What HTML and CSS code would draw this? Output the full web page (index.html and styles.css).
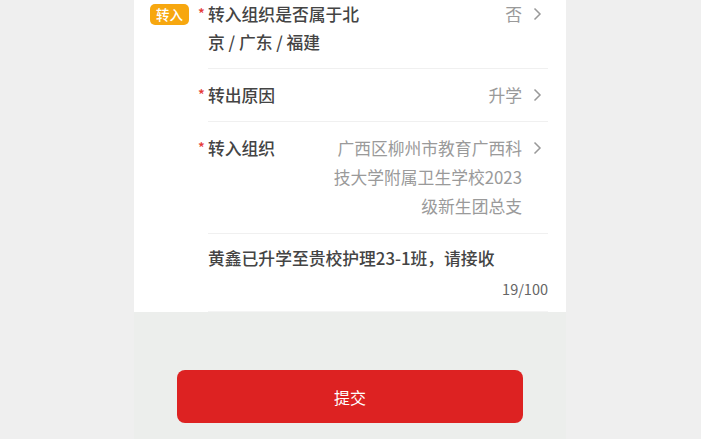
FILE: index.html
```html
<!DOCTYPE html>
<html lang="zh-CN">
<head>
  <meta charset="UTF-8" />
  <title>转接申请</title>
  <meta name="viewport" content="width=device-width, initial-scale=1.0" />
  <link rel="stylesheet" href="styles.css">
</head>
<body>

  <div class="page">

    <!-- 表单 -->
    <div class="card">
      <div class="tag-col">
        <span class="tag">转入</span>
      </div>

      <div class="fields">
        <div class="field">
          <div class="label required">转入组织是否属于北京 / 广东 / 福建</div>
          <div class="value">否</div>
          <svg class="arrow" width="9" height="14" viewBox="0 0 9 14"><path d="M1.5 1.5 L7 7 L1.5 12.5" /></svg>
        </div>

        <div class="field">
          <div class="label required">转出原因</div>
          <div class="value">升学</div>
          <svg class="arrow" width="9" height="14" viewBox="0 0 9 14"><path d="M1.5 1.5 L7 7 L1.5 12.5" /></svg>
        </div>

        <div class="field">
          <div class="label required">转入组织</div>
          <div class="value multi">广西区柳州市教育广西科技大学附属卫生学校2023级新生团总支</div>
          <svg class="arrow" width="9" height="14" viewBox="0 0 9 14"><path d="M1.5 1.5 L7 7 L1.5 12.5" /></svg>
        </div>

        <div class="remark">
          <p class="remark-text">黄鑫已升学至贵校护理23-1班，请接收</p>
          <div class="counter">19/100</div>
        </div>
      </div>
    </div>

    <!-- 底部按钮 -->
    <div class="footer">
      <button class="submit-btn">提交</button>
    </div>

  </div>

</body>
</html>
```

FILE: styles.css
```css
* { box-sizing: border-box; }

body {
  margin: 0;
  padding: 0;
  background-color: #efefef;
  font-family: "Noto Sans CJK SC", "Noto Sans", sans-serif;
  color: #444;
}

.page {
  width: 432px;
  height: 439px;
  margin: 0 0 0 134px;
  background-color: #eceeec;
  display: flex;
  flex-direction: column;
}

.card {
  background-color: #fff;
  display: flex;
  padding: 0 18px 0 16px;
}

.tag-col {
  width: 58px;
  flex-shrink: 0;
  padding-top: 4px;
}

.tag {
  display: block;
  width: 39px;
  height: 21px;
  line-height: 21px;
  text-align: center;
  font-size: 13.5px;
  font-weight: 500;
  color: #fff;
  background-color: #f7a70f;
  border-radius: 5px;
}

.fields {
  flex: 1;
}

.field {
  display: flex;
  align-items: flex-start;
  padding: 12px 0;
  border-bottom: 1px solid #f0f0f0;
  font-size: 16.8px;
  line-height: 28px;
}

.field:first-child {
  padding-top: 0;
}

.label {
  max-width: 9.4em;
  flex-shrink: 0;
  position: relative;
  font-weight: 500;
}

.required::before {
  content: "*";
  position: absolute;
  left: -10px;
  top: -1px;
  font-size: 14px;
  color: #e53935;
}

.value {
  flex: 1;
  text-align: right;
  color: #9a9a9a;
  margin-right: 11px;
}

.value.multi {
  flex: 0 1 auto;
  margin-left: auto;
  max-width: 196px;
  line-height: 29px;
}

.arrow {
  flex-shrink: 0;
  margin-top: 7px;
  margin-right: 6px;
  fill: none;
  stroke: #999;
  stroke-width: 1.5;
}

.remark {
  padding: 10px 0 12px;
  border-bottom: 1px solid #f4f4f4;
}

.remark-text {
  margin: 0;
  font-size: 16.8px;
  line-height: 28px;
  font-weight: 500;
}

.counter {
  margin-top: 7px;
  text-align: right;
  font-size: 14.5px;
  line-height: 20px;
  color: #666;
}

.footer {
  padding: 58px 43px 0;
}

.submit-btn {
  width: 100%;
  height: 53px;
  border: none;
  border-radius: 8px;
  background-color: #dd2222;
  color: #fff;
  font-family: inherit;
  font-size: 16px;
  cursor: pointer;
}
```
